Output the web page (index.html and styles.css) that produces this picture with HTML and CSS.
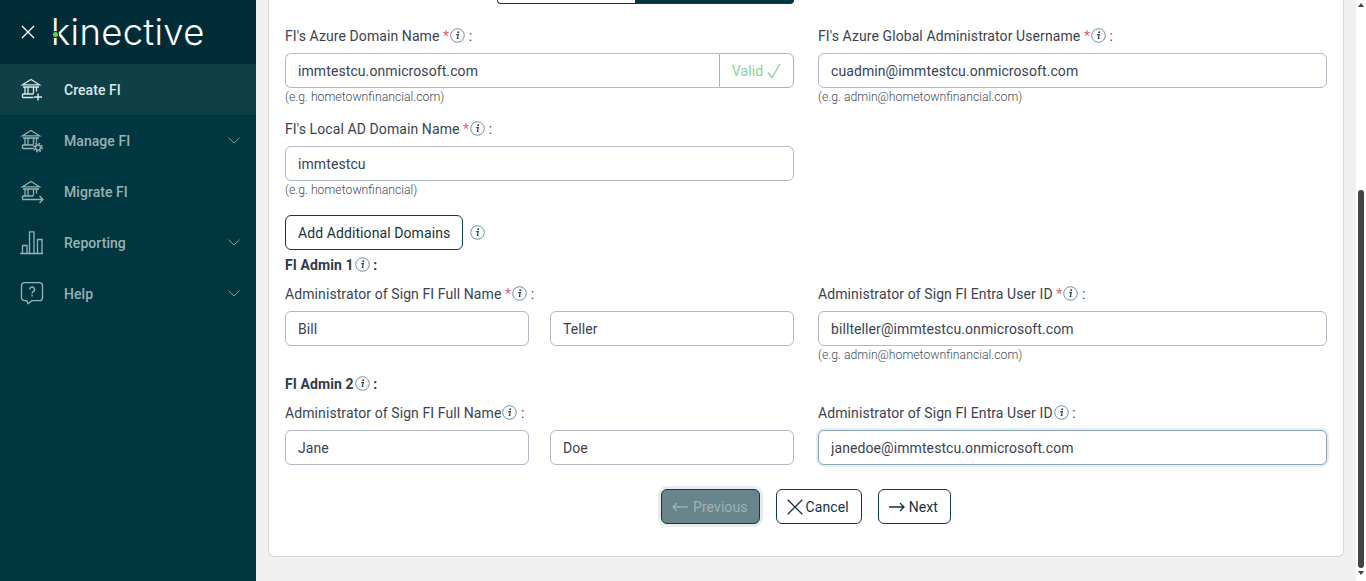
FILE: index.html
```html
<!DOCTYPE html>
<html lang="en">
<head>
<meta charset="utf-8">
<title>Create FI</title>
<link rel="stylesheet" href="styles.css">
</head>
<body>
<svg class="defs" width="0" height="0" aria-hidden="true">
  <defs>
    <symbol id="info" viewBox="0 0 15 15">
      <circle cx="7.5" cy="7.5" r="6.8" fill="none" stroke="#6f929b" stroke-width="1"/>
      <circle cx="8.2" cy="4.3" r="1" fill="#33414a"/>
      <path d="M6.200 6.600h2.100l-1 3.800h1.200" fill="none" stroke="#33414a" stroke-width="1.200"/>
    </symbol>
    <symbol id="chev" viewBox="0 0 12 7">
      <path d="M.5.7 6 6 11.500.7" fill="none" stroke="currentColor" stroke-width="1"/>
    </symbol>
    <symbol id="bank" viewBox="0 0 24 24" overflow="visible">
      <path d="M1.500 6.800 10 1.500l8.500 5.300ZM2 9h16M4 9.500v6M7 9.500v6M12.500 9.500v6M15.500 9.500v4M1.500 16h11M1.500 19.500h11M1.500 16v3.500" fill="none" stroke="currentColor" stroke-width="1.300"/>
    </symbol>
  </defs>
</svg>
<div class="app">
  <aside class="sidebar">
    <header class="brand">
      <svg class="close" viewBox="0 0 14 14" width="14" height="14"><path d="M1 1l12 12M13 1 1 13" stroke="#fff" stroke-width="1.300" fill="none"/></svg>
      <div class="logo">kinective<span class="logo-dot"></span></div>
    </header>
    <nav class="nav">
      <a class="nav-item active">
        <svg class="nav-icon" viewBox="0 0 24 24" width="24" height="24"><use href="#bank"/><path d="M17 15.500v7M13 19h8" stroke="currentColor" stroke-width="1.500" fill="none"/></svg>
        <span class="nav-text">Create FI</span>
      </a>
      <a class="nav-item">
        <svg class="nav-icon" viewBox="0 0 24 24" width="24" height="24"><use href="#bank"/><circle cx="17" cy="18.500" r="2.500" fill="#00363f" stroke="currentColor" stroke-width="1.300"/><circle cx="17" cy="18.500" r="4" fill="none" stroke="currentColor" stroke-width="1.800" stroke-dasharray="1.700 1.440"/></svg>
        <span class="nav-text">Manage FI</span>
        <svg class="chev" width="12" height="7"><use href="#chev"/></svg>
      </a>
      <a class="nav-item">
        <svg class="nav-icon" viewBox="0 0 24 24" width="24" height="24"><use href="#bank"/><path d="M12 19.500h10M18.500 16l3.500 3.500-3.500 3.500" stroke="currentColor" stroke-width="1.300" fill="none"/></svg>
        <span class="nav-text">Migrate FI</span>
      </a>
      <a class="nav-item">
        <svg class="nav-icon" viewBox="0 0 24 24" width="24" height="24"><path d="M-1 22.500h23M1.500 22v-7.500h4.500V22M8.500 22V.8H13V22M16.500 22V8.500H21V22" fill="none" stroke="currentColor" stroke-width="1.300"/></svg>
        <span class="nav-text">Reporting</span>
        <svg class="chev" width="12" height="7"><use href="#chev"/></svg>
      </a>
      <a class="nav-item">
        <svg class="nav-icon" viewBox="0 0 24 24" width="24" height="24"><path d="M3.500.7h15a3 3 0 0 1 3 3v12a3 3 0 0 1-3 3H11l-4 3-1.200-3H3.500a3 3 0 0 1-3-3v-12a3 3 0 0 1 3-3Z" fill="none" stroke="currentColor" stroke-width="1.300"/><path d="M8.700 7.500a2.400 2.400 0 1 1 3.500 2.100c-.8.400-1.100.9-1.100 2M11.100 12.800v1.600" fill="none" stroke="currentColor" stroke-width="1.400"/></svg>
        <span class="nav-text">Help</span>
        <svg class="chev" width="12" height="7"><use href="#chev"/></svg>
      </a>
    </nav>
  </aside>

  <main class="main">
    <section class="card">
      <div class="grid">
        <div class="tabs"><span class="tab"></span><span class="tab tab-on"></span></div>
      </div>

      <div class="grid">
        <div class="field">
          <label class="label">FI's Azure Domain Name <span class="req">*</span><svg class="info"><use href="#info"/></svg> :</label>
          <div class="group">
            <input class="input input-joined" value="immtestcu.onmicrosoft.com">
            <span class="valid">Valid <svg viewBox="0 0 14 16" width="14" height="16"><path d="M1 9.500l4 5L13 1" fill="none" stroke="#86d3a0" stroke-width="1.300"/></svg></span>
          </div>
          <small class="hint">(e.g. hometownfinancial.com)</small>
        </div>
        <div class="field">
          <label class="label">FI's Azure Global Administrator Username <span class="req">*</span><svg class="info"><use href="#info"/></svg> :</label>
          <input class="input" value="cuadmin@immtestcu.onmicrosoft.com">
          <small class="hint">(e.g. admin@hometownfinancial.com)</small>
        </div>
        <div class="field">
          <label class="label">FI's Local AD Domain Name <span class="req">*</span><svg class="info"><use href="#info"/></svg> :</label>
          <input class="input" value="immtestcu">
          <small class="hint">(e.g. hometownfinancial)</small>
        </div>
      </div>

      <div class="add-row">
        <button class="btn" type="button">Add Additional Domains</button>
        <svg class="info"><use href="#info"/></svg>
      </div>

      <h3 class="admin-title">FI Admin 1<svg class="info"><use href="#info"/></svg> :</h3>
      <div class="grid grid-admin">
        <div class="field field-admin">
          <label class="label">Administrator of Sign FI Full Name <span class="req">*</span><svg class="info"><use href="#info"/></svg> :</label>
          <div class="pair">
            <input class="input" value="Bill">
            <input class="input" value="Teller">
          </div>
        </div>
        <div class="field field-admin">
          <label class="label">Administrator of Sign FI Entra User ID <span class="req">*</span><svg class="info"><use href="#info"/></svg> :</label>
          <input class="input" value="billteller@immtestcu.onmicrosoft.com">
          <small class="hint">(e.g. admin@hometownfinancial.com)</small>
        </div>
      </div>

      <h3 class="admin-title">FI Admin 2<svg class="info"><use href="#info"/></svg> :</h3>
      <div class="grid">
        <div class="field field-last">
          <label class="label">Administrator of Sign FI Full Name<svg class="info"><use href="#info"/></svg> :</label>
          <div class="pair">
            <input class="input" value="Jane">
            <input class="input" value="Doe">
          </div>
        </div>
        <div class="field field-last">
          <label class="label">Administrator of Sign FI Entra User ID<svg class="info"><use href="#info"/></svg> :</label>
          <input class="input input-focus" value="janedoe@immtestcu.onmicrosoft.com">
        </div>
      </div>

      <div class="actions">
        <button class="btn btn-disabled" type="button"><svg viewBox="0 0 16 10" width="16" height="10"><path d="M16 5H1M5 1 1 5l4 4" fill="none" stroke="currentColor" stroke-width="1.300"/></svg>Previous</button>
        <button class="btn btn-cancel" type="button"><svg viewBox="0 0 16 16" width="16" height="16"><path d="M.7.7l14.600 14.600M15.300.7.700 15.300" fill="none" stroke="currentColor" stroke-width="1.300"/></svg>Cancel</button>
        <button class="btn btn-next" type="button"><svg viewBox="0 0 16 10" width="16" height="10"><path d="M0 5h15M11 1l4 4-4 4" fill="none" stroke="currentColor" stroke-width="1.300"/></svg>Next</button>
      </div>
    </section>
  </main>

  <div class="scrollbar">
    <span class="arrow arrow-up"></span>
    <span class="thumb"></span>
    <span class="arrow arrow-down"></span>
  </div>
</div>
</body>
</html>
```
FILE: styles.css
```css
* { box-sizing: border-box; }
html, body { margin: 0; height: 100%; overflow: hidden; }
body { font-family: Roboto, "Liberation Sans", sans-serif; font-size: 14px; letter-spacing: .09px; color: #3c4250; background: #f0f0f0; }
.defs { position: absolute; }
.app { display: flex; height: 581px; }

.sidebar { width: 256px; flex: none; background: #00363f; color: #97b2b7; }
.brand { height: 64px; background: #002c38; display: flex; align-items: center; padding-left: 21px; gap: 18px; }
.close { flex: none; margin-top: -1px; }
.logo { position: relative; font-family: Inter, sans-serif; font-weight: 300; font-size: 36.5px; line-height: 40px; letter-spacing: .3px; color: #fff; margin: -1px 0 0 -2px; }
.logo-dot { position: absolute; left: 2px; top: 20px; width: 5px; height: 5px; border-radius: 50%; background: #6fd13c; box-shadow: 0 0 0 1px #002c38; }
.nav-item { display: flex; align-items: center; height: 51px; padding: 0 16px 0 21px; gap: 19px; }
.nav-item.active { background: #0f3f47; color: #dce8ea; }
.nav-icon { flex: none; overflow: visible; }
.nav-text { flex: 1; font-weight: 500; letter-spacing: .05px; }
.chev { color: #7f9ea4; flex: none; }

.main { width: 1100px; flex: none; padding: 0 12px 24px; display: flex; }
.card { width: 1076px; background: #fff; border: 1px solid #d8d8d8; border-top: 0; border-radius: 0 0 6px 6px; padding: 0 16px 32px; }
.grid { display: grid; grid-template-columns: 509px 509px; column-gap: 24px; }
.tabs { grid-column: 1; justify-self: end; width: 297px; height: 4px; display: flex; margin-bottom: 21px; }
.tab { width: 139px; border: 1px solid #0d3c44; border-top: 0; border-radius: 0 0 0 4px; background: #fff; }
.tab-on { flex: 1; background: #00363f; border-radius: 0 0 4px 0; }

.field { min-width: 0; margin-bottom: 12px; min-height: 81px; }
.field-admin { margin-bottom: 10px; }
.field-last { min-height: 0; margin-bottom: 0; }
.label { display: block; height: 21px; line-height: 23px; margin-bottom: 7px; white-space: nowrap; }
.req { color: #e8636b; }
.info { width: 15px; height: 15px; vertical-align: -2px; margin-left: 1px; }
.input { display: block; width: 100%; height: 35px; padding: 0 12px; border: 1px solid #b3b8c4; border-radius: 6px; background: #fff; font: inherit; letter-spacing: inherit; color: #3c4250; outline: none; }
.input-focus { border-color: #8aa6b2; box-shadow: 0 0 0 2px rgba(100, 140, 155, .15); }
.group { display: flex; }
.input-joined { flex: 1; min-width: 0; border-right: 0; border-radius: 6px 0 0 6px; }
.valid { width: 75px; flex: none; height: 35px; display: flex; align-items: center; justify-content: center; gap: 4px; border: 1px solid #7fcf9a; border-radius: 0 6px 6px 0; color: #86d3a0; }
.hint { display: block; font-size: 12.25px; font-weight: 300; line-height: 18px; letter-spacing: 0; color: #444b59; }
.pair { display: grid; grid-template-columns: 244px 244px; column-gap: 21px; }

.add-row { display: flex; align-items: center; gap: 6px; margin: 4px 0 5px; }
.admin-title { margin: 0 0 7px; font-size: 14px; font-weight: 700; line-height: 21px; height: 21px; color: #333a46; }
.btn { height: 35px; padding: 0 12px; border: 1px solid #0d3c44; border-radius: 6px; background: #fff; font: inherit; letter-spacing: inherit; color: #15323b; display: inline-flex; align-items: center; }
.actions { display: flex; justify-content: center; gap: 16px; margin-top: 24px; }
.btn-cancel { gap: 3px; padding: 0 12px 0 10px; }
.btn-next { gap: 4px; padding: 0 12px 0 10px; }
.btn-disabled { gap: 5px; padding: 0 11px 0 10px; background: #67858a; color: #9db3b6; box-shadow: 0 0 0 3px rgba(100, 130, 140, .15); }

.scrollbar { width: 10px; flex: none; background: #fff; display: flex; flex-direction: column; align-items: center; padding: 3px 0; }
.arrow { width: 0; height: 0; border-left: 3px solid transparent; border-right: 3px solid transparent; }
.arrow-up { border-bottom: 4px solid #444; margin-bottom: 183px; }
.thumb { width: 6px; height: 378px; border-radius: 3px; background: #444; }
.arrow-down { border-top: 4px solid #444; margin-top: 3px; }
```
